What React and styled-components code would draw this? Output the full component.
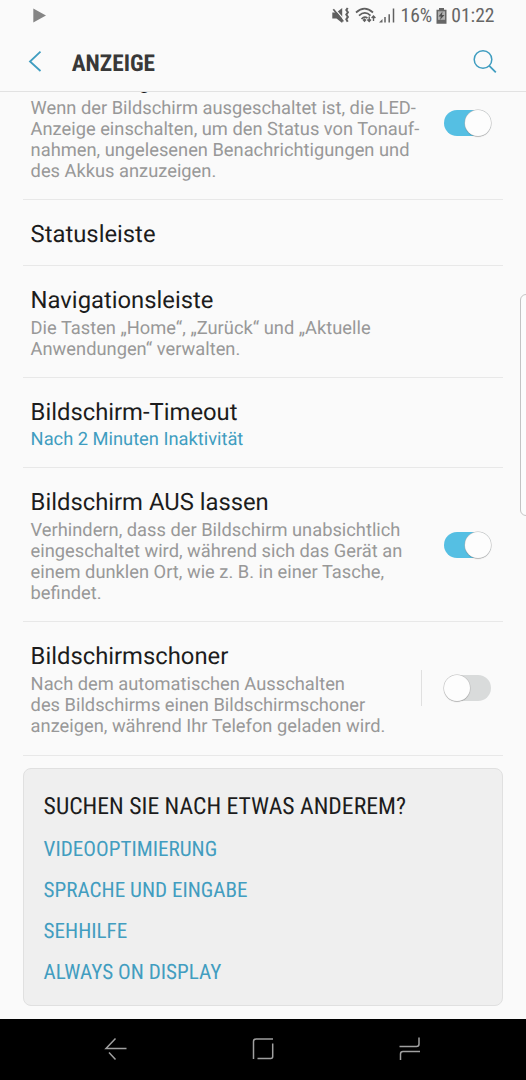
import React from "react";
import styled, { createGlobalStyle } from "styled-components";

const Global = createGlobalStyle`
  * { box-sizing: border-box; }
  body { margin: 0; background: #fafafa; font-family: Roboto, sans-serif; text-rendering: geometricPrecision; }
`;

const Screen = styled.div`
  position: relative;
  width: 526px;
  height: 1080px;
  display: flex;
  flex-direction: column;
  background: #fafafa;
  overflow: hidden;
`;

const StatusBar = styled.div`
  height: 31px;
  flex: none;
  display: flex;
  align-items: center;
  justify-content: space-between;
  padding: 0 31.500px 0 33px;
  color: #666;
`;

const StatusGroup = styled.div`
  display: flex;
  align-items: center;
  gap: 4px;
`;

const Condensed = styled.span`
  display: block;
  white-space: nowrap;
  font-family: "Roboto Condensed", Roboto, sans-serif;
  font-stretch: 75%;
  font-size: ${(p) => p.$size}px;
  font-weight: ${(p) => p.$weight || 400};
`;

const Header = styled.header`
  height: 61px;
  flex: none;
  display: flex;
  align-items: center;
  padding: 0 28px;
  border-bottom: 1px solid #e2e2e2;
  color: #383838;
`;

const HeaderTitle = styled.div`
  flex: 1;
  margin-left: 29.700px;
  padding-top: 3px;
`;

const List = styled.main`
  flex: 1;
  min-height: 0;
  overflow: hidden;
  padding: 0 23px;
`;

const Row = styled.section`
  height: ${(p) => p.$height}px;
  margin-top: ${(p) => p.$shift || 0}px;
  display: flex;
  padding: 20px 12px 0 7.600px;
  border-bottom: 1px solid #e8e8e8;
`;

const RowText = styled.div`
  flex: 1;
  white-space: nowrap;
`;

const RowTitle = styled.div`
  font-size: 23.800px;
  line-height: 28px;
  color: #1c1c1c;
`;

const Line = styled.div`
  font-size: 18.300px;
  line-height: 21.150px;
  color: ${(p) => (p.$accent ? "#3f9dc0" : "#989898")};
  &:nth-child(2) { margin-top: ${(p) => (p.$accent ? 3 : 4)}px; }
`;

const SwitchArea = styled.div`
  align-self: flex-start;
  display: flex;
  align-items: center;
  height: 36px;
  margin-top: ${(p) => p.$top}px;
  padding-left: 22px;
  border-left: 1px solid ${(p) => (p.$divided ? "#e0e0e0" : "transparent")};
`;

const Track = styled.div`
  width: 47.500px;
  height: 26px;
  border-radius: 13px;
  display: flex;
  align-items: center;
  justify-content: ${(p) => (p.$on ? "flex-end" : "flex-start")};
  background: ${(p) => (p.$on ? "#55bfe3" : "#d9dbdb")};
`;

const Knob = styled.div`
  width: 26.500px;
  height: 26.500px;
  flex: none;
  border-radius: 50%;
  background: #fdfdfd;
  box-shadow: 0 0 0 0.5px #bbb, 0 0.8px 1px rgba(0, 0, 0, 0.35);
`;

const Card = styled.section`
  height: 238px;
  margin-top: 12px;
  padding: 21px 19.600px;
  border: 1px solid #e0e0e0;
  border-radius: 8px;
  background: #efefef;
`;

const CardTitle = styled.div`
  height: 32px;
  display: flex;
  align-items: center;
  color: #1c1c1c;
  margin-bottom: 6.700px;
`;

const CardLink = styled.div`
  height: 41.200px;
  display: flex;
  align-items: center;
  color: #429dc0;
`;

const NavBar = styled.nav`
  height: 61px;
  flex: none;
  display: flex;
  align-items: center;
  justify-content: space-between;
  padding: 0 104px 2px;
  background: #000;
`;

const EdgeHandle = styled.div`
  position: absolute;
  top: 294px;
  right: -9px;
  width: 15px;
  height: 222px;
  border: 1px solid #c4c4c4;
  border-radius: 6px;
  background: #fcfcfc;
`;

const rows = [
  { title: "LED-Anzeige", height: 154, shift: -46, lines: ["Wenn der Bildschirm ausgeschaltet ist, die LED-", "Anzeige einschalten, um den Status von Tonauf-", "nahmen, ungelesenen Benachrichtigungen und", "des Akkus anzuzeigen."], toggle: "on", top: 39 },
  { title: "Statusleiste", height: 66, lines: [] },
  { title: "Navigationsleiste", height: 112, lines: ["Die Tasten „Home“, „Zurück“ und „Aktuelle", "Anwendungen“ verwalten."] },
  { title: "Bildschirm-Timeout", height: 90, lines: ["Nach 2 Minuten Inaktivität"], accent: true },
  { title: "Bildschirm AUS lassen", height: 154, lines: ["Verhindern, dass der Bildschirm unabsichtlich", "eingeschaltet wird, während sich das Gerät an", "einem dunklen Ort, wie z. B. in einer Tasche,", "befindet."], toggle: "on", top: 39 },
  { title: "Bildschirmschoner", height: 134, lines: ["Nach dem automatischen Ausschalten", "des Bildschirms einen Bildschirmschoner", "anzeigen, während Ihr Telefon geladen wird."], toggle: "off", top: 28, divided: true },
];

const links = ["VIDEOOPTIMIERUNG", "SPRACHE UND EINGABE", "SEHHILFE", "ALWAYS ON DISPLAY"];

const PlayIcon = () => (
  <svg width="14" height="15" viewBox="0 0 14 15"><path d="M.3.5 13 7.500.3 14.500z" fill="#858585" /></svg>
);

const StatusIcons = () => (
  <svg width="64" height="20" viewBox="333 6 64 20" fill="none" stroke="#606060">
    <path d="M333.300 12.500h4.200l5.700-4.500v15l-5.700-4.500h-4.200z" fill="#606060" stroke="none" />
    <path d="m335.800 8.800 9 10.500" stroke="#fafafa" strokeWidth="1.300" />
    <path d="m334.300 9.200 10 12.300" strokeWidth="1.700" />
    <path d="m348.700 8-1.400 2 1.600 2.300-1.600 2.300 1.600 2.300-1.600 2.300 1.400 2.600" strokeWidth="2" />
    <path d="M357 12.500q8.500-7.800 17 0M360 15.700q6-5.500 11.500 0M362.500 19q3-3.200 6-.8" strokeWidth="1.700" />
    <path d="m363.500 20 2-1.800 2 1.800-2 2.200z" fill="#606060" stroke="none" />
    <path d="M370.200 16.500v5m-1.800-1.900 1.800 1.900 1.800-1.900M374.500 21v-5m-1.900 2 1.900-2 1.900 2" strokeWidth="1.400" />
    <path d="M380 22.500h3.500V19z" fill="#666" stroke="none" />
    <path d="M386 22.500V17M390.200 22.500v-8.300M394.500 22.500V8.500" strokeWidth="1.500" />
  </svg>
);

const BatteryIcon = () => (
  <svg width="11" height="16" viewBox="0 0 11 16">
    <path d="M3 0h5v1.800h2.500v14H.5v-14H3z" fill="#666" />
    <path d="M2 3.300h7v8.500H2z" fill="#b0b0b0" />
    <path d="M6.500 3.500 2.500 8.500h2.300L4 12 8.500 7H6z" fill="#505050" />
  </svg>
);

const BackIcon = () => (
  <svg width="14" height="22" viewBox="0 0 14 22" fill="none" stroke="#3f9dc0" strokeWidth="1.800"><path d="M12.500 1.700 2 11.500l10.500 9.500" /></svg>
);

const SearchIcon = () => (
  <svg width="25" height="25" viewBox="0 0 25 25" fill="none" stroke="#3f9dc0" strokeWidth="1.500"><circle cx="10" cy="10.500" r="8.800" /><path d="m16.300 16.800 6.500 6.500" strokeWidth="1.800" /></svg>
);

const NavIcon = ({ d }) => (
  <svg width="24" height="26" viewBox="0 0 24 26" fill="none" stroke="#a0a0a0" strokeWidth="1.500"><path d={d} /></svg>
);

const Switch = ({ on }) => <Track $on={on}><Knob /></Track>;

export default function App() {
  return (
    <Screen>
      <Global />
      <StatusBar>
        <PlayIcon />
        <StatusGroup>
          <StatusIcons />
          <Condensed $size={19.600}>16%</Condensed>
          <BatteryIcon />
          <Condensed $size={19.600}>01:22</Condensed>
        </StatusGroup>
      </StatusBar>
      <Header>
        <BackIcon />
        <HeaderTitle><Condensed $size={23.300} $weight={700}>ANZEIGE</Condensed></HeaderTitle>
        <SearchIcon />
      </Header>
      <List>
        {rows.map((r) => (
          <Row key={r.title} $height={r.height} $shift={r.shift}>
            <RowText>
              <RowTitle>{r.title}</RowTitle>
              {r.lines.map((l) => <Line key={l} $accent={r.accent}>{l}</Line>)}
            </RowText>
            {r.toggle && (
              <SwitchArea $top={r.top} $divided={r.divided}><Switch on={r.toggle === "on"} /></SwitchArea>
            )}
          </Row>
        ))}
        <Card>
          <CardTitle><Condensed $size={23.700}>SUCHEN SIE NACH ETWAS ANDEREM?</Condensed></CardTitle>
          {links.map((l) => <CardLink key={l}><Condensed $size={21.150}>{l}</Condensed></CardLink>)}
        </Card>
      </List>
      <NavBar>
        <NavIcon d="M11.500 2.500 2 12.500h20.500M5 16.500l6.500 7" />
        <NavIcon d="M22 3H5q-2.500 0-2.500 2.500V23M21.700 7.500v13q0 2-2 2H6.500" />
        <NavIcon d="M1.500 10.500h17q2.500 0 2.500-2.500V1.500M22 15.500H5q-2.500 0-2.500 2.500v6" />
      </NavBar>
      <EdgeHandle />
    </Screen>
  );
}
